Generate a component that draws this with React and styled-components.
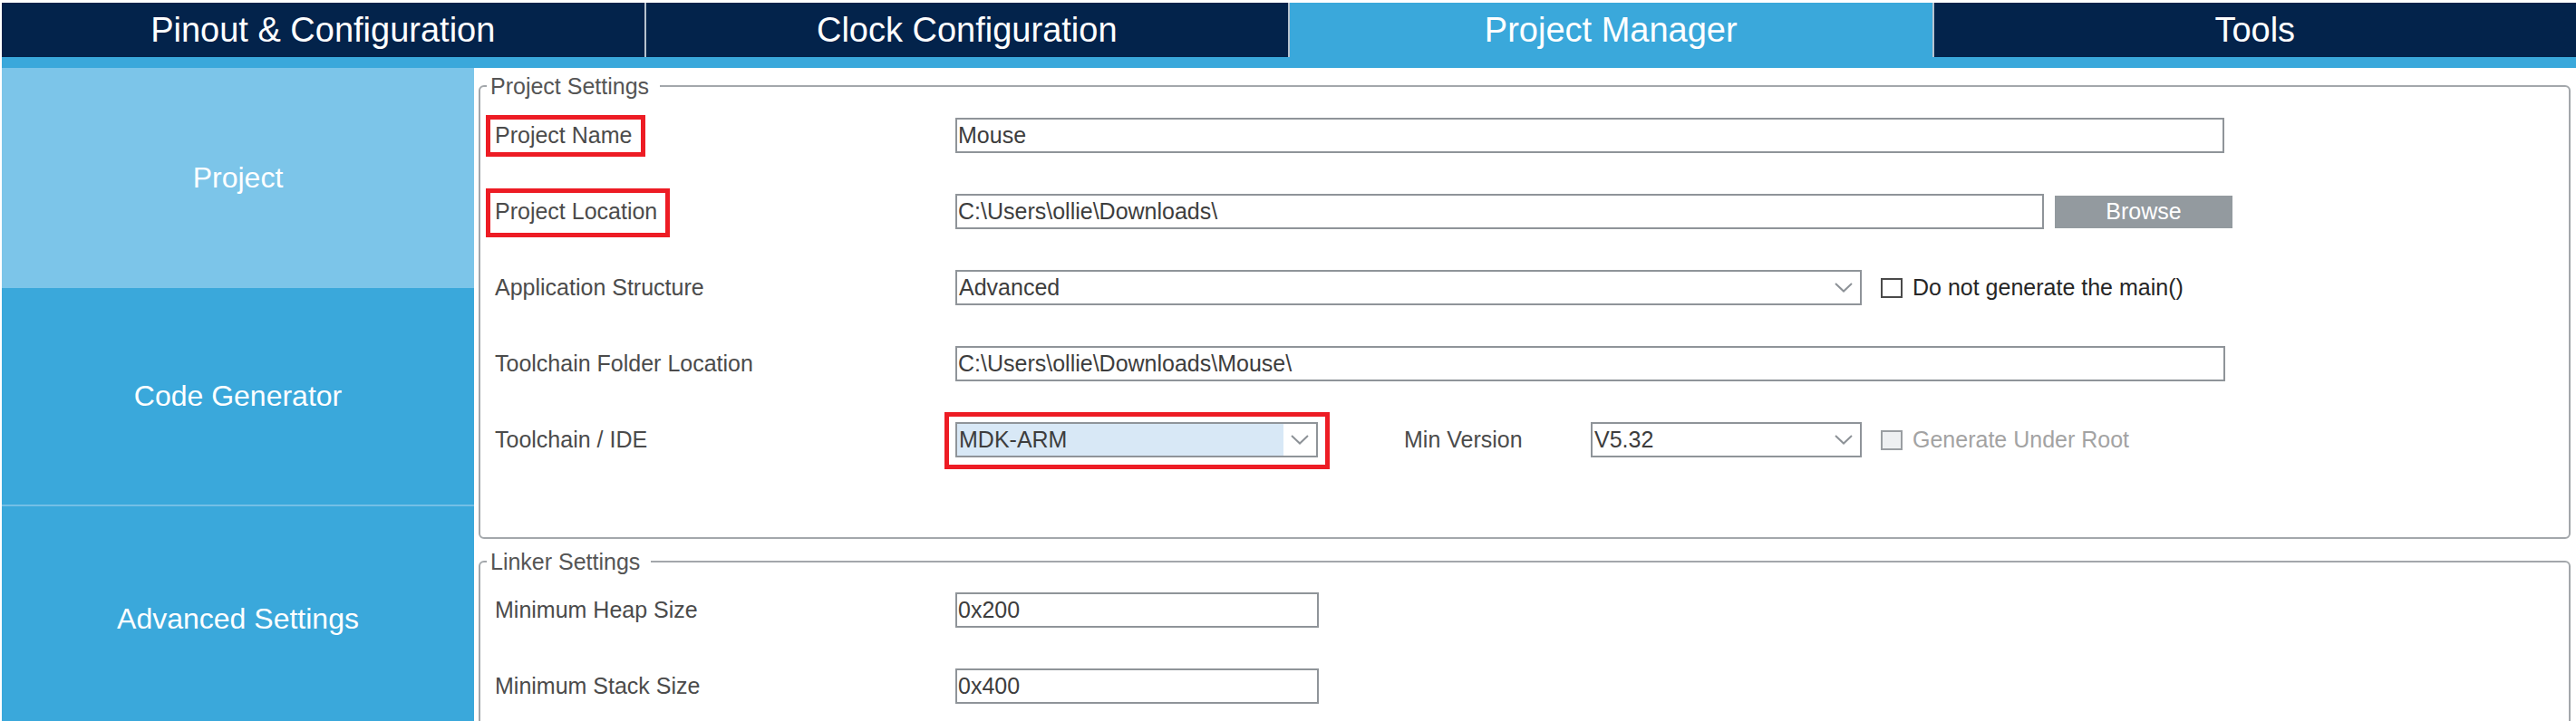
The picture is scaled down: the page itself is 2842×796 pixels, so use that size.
import React from 'react';
import styled, { createGlobalStyle } from 'styled-components';

const GlobalStyle = createGlobalStyle`
  html, body {
    margin: 0;
    padding: 0;
    background: #fff;
    font-family: "Liberation Sans", Arial, sans-serif;
  }
  * {
    box-sizing: border-box;
  }
`;

const Page = styled.div`
  width: 2842px;
  height: 796px;
  padding: 3px 0 0 2px;
  display: flex;
  flex-direction: column;
  overflow: hidden;
`;

const TabBar = styled.div`
  display: flex;
  height: 60px;
  background: #03234b;
`;

const Tab = styled.div`
  flex: 1;
  display: flex;
  align-items: center;
  justify-content: center;
  font-size: 38px;
  color: #fff;
  background: ${(p) => (p.$active ? '#3aa8db' : '#03234b')};
  border-left: ${(p) => (p.$first ? 'none' : '2px solid #b7c2ce')};
`;

const Strip = styled.div`
  height: 12px;
  background: #3aa8db;
`;

const Body = styled.div`
  flex: 1;
  display: flex;
  min-height: 0;
`;

const Sidebar = styled.div`
  width: 521px;
  display: flex;
  flex-direction: column;
  background: #3aa8db;
  overflow: hidden;
`;

const SideItem = styled.div`
  height: ${(p) => p.$h}px;
  flex: none;
  display: flex;
  align-items: center;
  justify-content: center;
  font-size: 32px;
  color: #fff;
  background: ${(p) => (p.$active ? '#7cc5e9' : '#3aa8db')};
  border-top: ${(p) => (p.$line ? '2px solid #74bfe6' : 'none')};
`;

const Main = styled.div`
  flex: 1;
  padding: 6px 6px 0 5px;
  overflow: hidden;
`;

const Group = styled.fieldset`
  margin: ${(p) => (p.$second ? '11px' : '0')} 0 0 0;
  padding: 0;
  border: 2px solid #a3a7ab;
  border-radius: 6px;
  min-width: 0;
`;

const Legend = styled.legend`
  margin-left: 7px;
  padding: 0 12px 0 4px;
  font-size: 25px;
  line-height: 28px;
  color: #555;
`;

const Rows = styled.div`
  display: flex;
  flex-direction: column;
  gap: 45px;
  padding: ${(p) => p.$pad};
  padding-left: 16px;
`;

const Row = styled.div`
  display: flex;
  align-items: center;
  height: 39px;
`;

const Label = styled.div`
  width: ${(p) => p.$w || 508}px;
  flex: none;
  font-size: 25px;
  line-height: 29px;
  color: #4b4b4b;
  margin-left: ${(p) => p.$ml || 0}px;
`;

const Highlight = styled.span`
  position: relative;
  display: inline-block;

  &::after {
    content: '';
    position: absolute;
    top: ${(p) => -p.$t}px;
    left: ${(p) => -p.$l}px;
    right: ${(p) => -p.$r}px;
    bottom: ${(p) => -p.$b}px;
    border: 5px solid #ed1c24;
    pointer-events: none;
  }
`;

const Input = styled.div`
  width: ${(p) => p.$w}px;
  height: 39px;
  flex: none;
  display: flex;
  align-items: center;
  border: 2px solid #8f9499;
  background: #fff;
  padding-left: 1px;
  font-size: 25px;
  color: #3d3d3d;
  white-space: nowrap;
`;

const SelectBox = styled.div`
  width: ${(p) => p.$w}px;
  height: 39px;
  flex: none;
  display: flex;
  border: 2px solid #8f9499;
  background: #fff;
  font-size: 25px;
  color: #3d3d3d;
`;

const SelectValue = styled.div`
  flex: 1;
  display: flex;
  align-items: center;
  padding-left: 2px;
  background: ${(p) => (p.$hl ? '#d8e8f6' : 'transparent')};
`;

const ArrowBox = styled.div`
  width: 36px;
  display: flex;
  align-items: center;
  justify-content: center;
`;

const Browse = styled.div`
  width: 196px;
  height: 36px;
  margin-left: 12px;
  display: flex;
  align-items: center;
  justify-content: center;
  background: #939a9f;
  color: #fff;
  font-size: 25px;
`;

const CheckRow = styled.div`
  display: flex;
  align-items: center;
  margin-left: 21px;
  font-size: 25px;
  color: ${(p) => (p.$disabled ? '#a3a3a3' : '#262626')};
`;

const Box = styled.span`
  width: 24px;
  height: 22px;
  margin-right: 11px;
  border: 2px solid ${(p) => (p.$disabled ? '#9a9ea2' : '#4a4a4a')};
  background: ${(p) => (p.$disabled ? '#eef0f2' : '#fff')};
`;

const Chevron = () => (
  <svg width="20" height="11" viewBox="0 0 20 11">
    <path d="M1 1 L10 9.5 L19 1" fill="none" stroke="#8d9297" strokeWidth="2" />
  </svg>
);

const Select = ({ w, value, hl }) => (
  <SelectBox $w={w}>
    <SelectValue $hl={hl}>{value}</SelectValue>
    <ArrowBox>
      <Chevron />
    </ArrowBox>
  </SelectBox>
);

const Check = ({ label, disabled }) => (
  <CheckRow $disabled={disabled}>
    <Box $disabled={disabled} />
    {label}
  </CheckRow>
);

const tabs = ['Pinout & Configuration', 'Clock Configuration', 'Project Manager', 'Tools'];

export default function App() {
  return (
    <>
      <GlobalStyle />
      <Page>
        <TabBar>
          {tabs.map((t, i) => (
            <Tab key={t} $first={i === 0} $active={t === 'Project Manager'}>
              {t}
            </Tab>
          ))}
        </TabBar>
        <Strip />
        <Body>
          <Sidebar>
            <SideItem $h={243} $active>Project</SideItem>
            <SideItem $h={239}>Code Generator</SideItem>
            <SideItem $h={250} $line>Advanced Settings</SideItem>
          </Sidebar>
          <Main>
            <Group>
              <Legend>Project Settings</Legend>
              <Rows $pad="21px 0 88px">
                <Row>
                  <Label>
                    <Highlight $t={8} $l={10} $r={15} $b={9}>Project Name</Highlight>
                  </Label>
                  <Input $w={1400}>Mouse</Input>
                </Row>
                <Row>
                  <Label>
                    <Highlight $t={11} $l={10} $r={14} $b={14}>Project Location</Highlight>
                  </Label>
                  <Input $w={1201}>C:\Users\ollie\Downloads\</Input>
                  <Browse>Browse</Browse>
                </Row>
                <Row>
                  <Label>Application Structure</Label>
                  <Select w={1000} value="Advanced" />
                  <Check label="Do not generate the main()" />
                </Row>
                <Row>
                  <Label>Toolchain Folder Location</Label>
                  <Input $w={1401}>C:\Users\ollie\Downloads\Mouse\</Input>
                </Row>
                <Row>
                  <Label>Toolchain / IDE</Label>
                  <Highlight $t={11} $l={12} $r={13} $b={13}>
                    <Select w={400} value="MDK-ARM" hl />
                  </Highlight>
                  <Label $w={206} $ml={95}>Min Version</Label>
                  <Select w={299} value="V5.32" />
                  <Check label="Generate Under Root" disabled />
                </Row>
              </Rows>
            </Group>
            <Group $second>
              <Legend>Linker Settings</Legend>
              <Rows $pad="20px 0 80px">
                <Row>
                  <Label>Minimum Heap Size</Label>
                  <Input $w={401}>0x200</Input>
                </Row>
                <Row>
                  <Label>Minimum Stack Size</Label>
                  <Input $w={401}>0x400</Input>
                </Row>
              </Rows>
            </Group>
          </Main>
        </Body>
      </Page>
    </>
  );
}
